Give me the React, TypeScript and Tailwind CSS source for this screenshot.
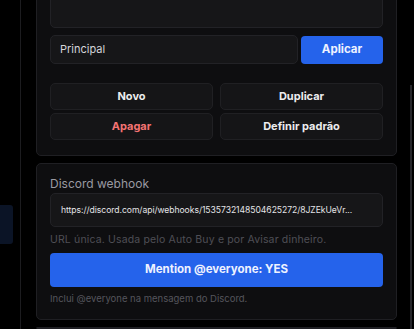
import React from "react";

export default function App() {
  const font = { fontFamily: "Inter, 'Noto Sans', sans-serif" };
  return (
    <div className="w-[414px] h-[329px] bg-black overflow-hidden flex" style={font}>
      {/* left rail */}
      <div className="w-[21px] h-full border-r border-[#1c1c1f] flex flex-col pt-[205px]">
        <div className="w-[13px] h-[39px] bg-[#0b1426] rounded-r-[3px]" />
      </div>
      {/* main column */}
      <div className="ml-[15px] w-[361px] flex flex-col gap-[7px] mt-[-40px]">
        {/* card 1 */}
        <div className="border border-[#1f1f23] bg-[#0e0e10] rounded-[5px] px-[13px] pt-[12px] pb-[15px] flex flex-col">
          <div className="h-[55px] bg-[#161618] border border-[#222226] rounded-[5px]" />
          <div className="flex gap-[3px] mt-[7px]">
            <div className="flex-1 h-[29px] bg-[#161618] border border-[#222226] rounded-[5px] flex items-center px-[9px] text-[11px] text-[#d4d4d8]">
              Principal
            </div>
            <div className="w-[82px] h-[28px] mt-[1px] bg-[#2563eb] rounded-[4px] flex items-center justify-center text-[11.5px] font-bold text-[#eef2ff]">
              Aplicar
            </div>
          </div>
          <div className="grid grid-cols-2 gap-x-[7px] gap-y-[3px] mt-[19px]">
            <div className="h-[27px] bg-[#151517] border border-[#202023] rounded-[5px] flex items-center justify-center text-[11px] font-bold text-[#ececee]">Novo</div>
            <div className="h-[27px] bg-[#151517] border border-[#202023] rounded-[5px] flex items-center justify-center text-[11px] font-bold text-[#ececee]">Duplicar</div>
            <div className="h-[27px] bg-[#151517] border border-[#202023] rounded-[5px] flex items-center justify-center text-[11px] font-bold text-[#f47373]">Apagar</div>
            <div className="h-[27px] bg-[#151517] border border-[#202023] rounded-[5px] flex items-center justify-center text-[11px] font-bold text-[#ececee]">Definir padrão</div>
          </div>
        </div>
        {/* card 2 */}
        <div className="border border-[#1f1f23] bg-[#0e0e10] rounded-[5px] px-[13px] pt-[12px] pb-[13px] flex flex-col">
          <div className="text-[12px] leading-[16px] text-[#9a9aa2]">Discord webhook</div>
          <div className="mt-[1px] h-[34px] bg-[#161618] border border-[#222226] rounded-[5px] flex items-center px-[10px]">
            <span className="text-[8.6px] tracking-[-0.05px] text-[#e4e4e7] whitespace-nowrap">
              https://discord.com/api/webhooks/1535732148504625272/8JZEkUeVr...
            </span>
          </div>
          <div className="mt-[6px] text-[10.5px] tracking-[0.15px] leading-[14px] text-[#4f4f56]">
            URL única. Usada pelo Auto Buy e por Avisar dinheiro.
          </div>
          <div className="mt-[6px] h-[34px] bg-[#2563eb] rounded-[4px] flex items-center justify-center text-[11.5px] font-bold text-[#eef2ff]">
            Mention @everyone: YES
          </div>
          <div className="mt-[5px] text-[9.5px] leading-[14px] text-[#55555c]">
            Inclui @everyone na mensagem do Discord.
          </div>
        </div>
        {/* card 3 */}
        <div className="border border-[#1f1f23] bg-[#0e0e10] rounded-[5px] h-[60px]" />
      </div>
      {/* scrollbar */}
      <div className="ml-[13px] pt-[85px] h-full">
        <div className="w-[2px] h-full bg-[#26262a]" />
      </div>
    </div>
  );
}
